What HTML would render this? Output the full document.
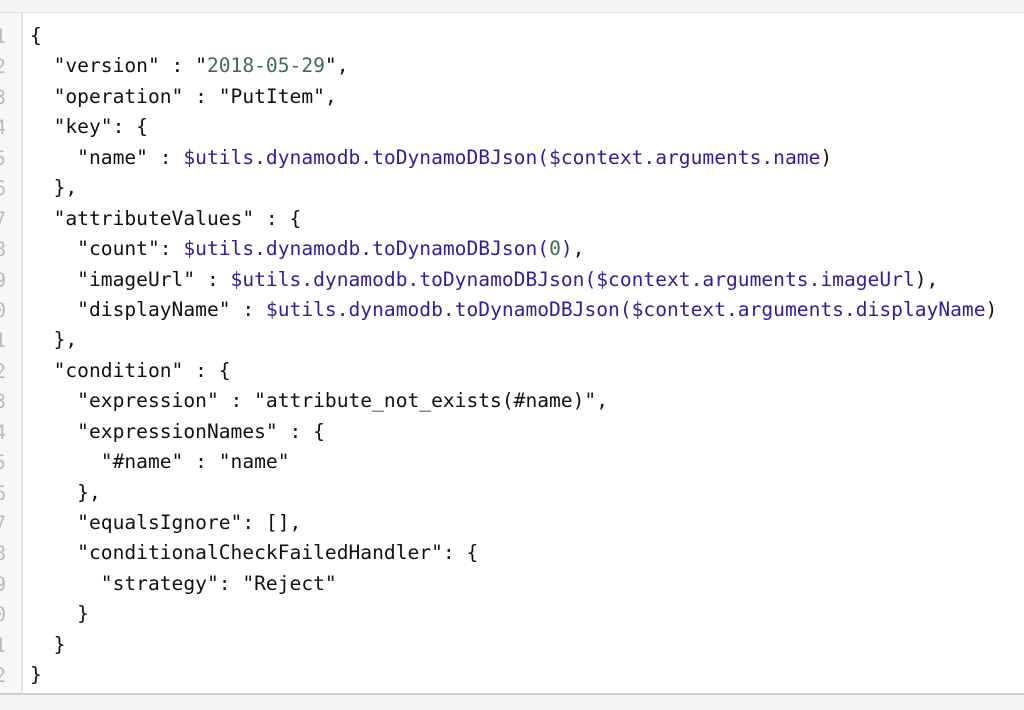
<!DOCTYPE html>
<html><head><meta charset="utf-8"><style>
html,body{margin:0;padding:0;width:1024px;height:708px;overflow:hidden;background:#fff;}
.top{position:absolute;left:0;top:0;width:1024px;height:12px;background:#f4f4f4;border-bottom:1px solid #e2e2e2;}
.bot{position:absolute;left:0;top:693px;width:1024px;height:15px;background:#f3f3f3;border-top:2px solid #cfcfcf;}
.gut{position:absolute;left:0;top:13px;width:21px;height:680px;background:#f7f7f7;border-right:2px solid #e4e4e4;overflow:hidden;}
.nums{position:absolute;right:15px;top:9px;font-family:"DejaVu Sans Mono",monospace;font-size:19.6px;line-height:30.43px;color:#bbb;text-align:right;}
pre{position:absolute;left:30px;top:21px;margin:0;font-family:"DejaVu Sans Mono","Liberation Mono",monospace;font-size:19.6px;line-height:30.43px;color:#111;}
.s{color:#3d6e55}.f{color:#2e1f9a}
</style></head><body>
<div class="top"></div>
<div class="gut"><div class="nums">1<br>2<br>3<br>4<br>5<br>6<br>7<br>8<br>9<br>10<br>11<br>12<br>13<br>14<br>15<br>16<br>17<br>18<br>19<br>20<br>21<br>22</div></div>
<pre>{
  "version" : "<span class="s">2018-05-29</span>",
  "operation" : "PutItem",
  "key": {
    "name" : <span class="f">$utils.dynamodb.toDynamoDBJson($context.arguments.name</span>)
  },
  "attributeValues" : {
    "count": <span class="f">$utils.dynamodb.toDynamoDBJson(</span><span class="s">0</span><span class="f">)</span>,
    "imageUrl" : <span class="f">$utils.dynamodb.toDynamoDBJson($context.arguments.imageUrl</span>),
    "displayName" : <span class="f">$utils.dynamodb.toDynamoDBJson($context.arguments.displayName</span>)
  },
  "condition" : {
    "expression" : "attribute_not_exists(#name)",
    "expressionNames" : {
      "#name" : "name"
    },
    "equalsIgnore": [],
    "conditionalCheckFailedHandler": {
      "strategy": "Reject"
    }
  }
}</pre>
<div class="bot"></div>
</body></html>
